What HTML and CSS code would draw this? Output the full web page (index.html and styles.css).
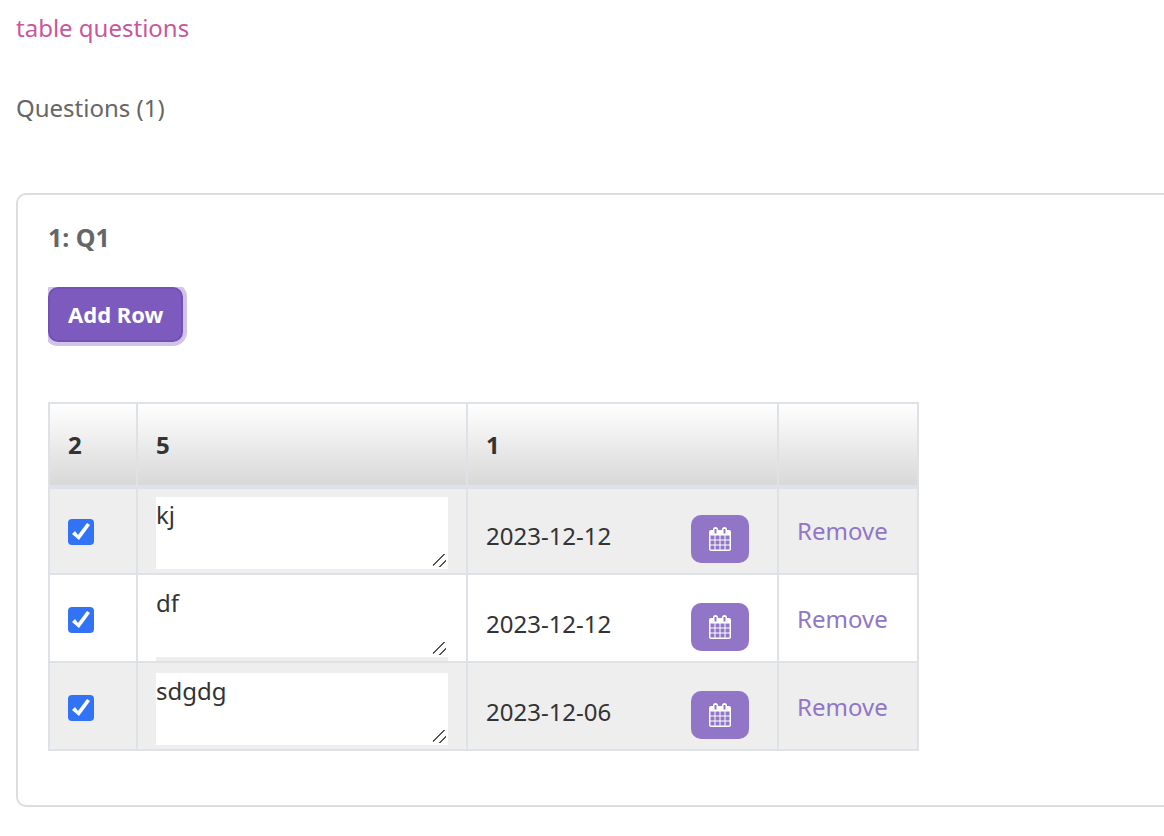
FILE: index.html
```html
<!DOCTYPE html>
<html lang="en">
<head>
  <meta charset="UTF-8" />
  <meta name="viewport" content="width=device-width, initial-scale=1.0"/>
  <title>table questions</title>
  <link rel="stylesheet" href="styles.css">
</head>
<body>
  <!-- calendar icon, shared by the date buttons -->
  <svg class="sprite" width="0" height="0" aria-hidden="true">
    <symbol id="icon-calendar" viewBox="0 0 22 24">
      <path fill="currentColor" fill-rule="evenodd" d="M2 3h2V2.500a2.500 2.500 0 0 1 5 0V3h4V2.500a2.500 2.500 0 0 1 5 0V3h2a2 2 0 0 1 2 2v17a2 2 0 0 1-2 2H2a2 2 0 0 1-2-2V5a2 2 0 0 1 2-2zM5.500 2v4.500h2V2zM14.500 2v4.500h2V2zM1.500 8.500v4h4v-4zM6.500 8.500v4h4v-4zM11.500 8.500v4h4v-4zM16.500 8.500v4h4v-4zM1.500 13.500v4h4v-4zM6.500 13.500v4h4v-4zM11.500 13.500v4h4v-4zM16.500 13.500v4h4v-4zM1.500 18.500v4h4v-4zM6.500 18.500v4h4v-4zM11.500 18.500v4h4v-4zM16.500 18.500v4h4v-4z"/>
    </symbol>
  </svg>

  <h1 class="title">table questions</h1>
  <h2 class="subtitle">Questions (1)</h2>

  <div class="question">
    <h3>1: Q1</h3>
    <div class="actions">
      <button class="btn" type="button">Add Row</button>
    </div>

    <table class="question-table">
      <thead>
        <tr>
          <th class="col-check">2</th>
          <th class="col-text">5</th>
          <th class="col-date">1</th>
          <th class="col-remove"></th>
        </tr>
      </thead>
      <tbody>
        <tr>
          <td><input type="checkbox" class="check" aria-label="2" checked></td>
          <td><div class="text-wrap"><textarea aria-label="5">kj</textarea></div></td>
          <td>
            <div class="date-group">
              <input type="text" aria-label="1" value="2023-12-12">
              <button type="button" aria-label="Pick a date"><svg><use href="#icon-calendar"/></svg></button>
            </div>
          </td>
          <td><a href="#" class="remove">Remove</a></td>
        </tr>
        <tr>
          <td><input type="checkbox" class="check" aria-label="2" checked></td>
          <td><div class="text-wrap"><textarea aria-label="5">df</textarea></div></td>
          <td>
            <div class="date-group">
              <input type="text" aria-label="1" value="2023-12-12">
              <button type="button" aria-label="Pick a date"><svg><use href="#icon-calendar"/></svg></button>
            </div>
          </td>
          <td><a href="#" class="remove">Remove</a></td>
        </tr>
        <tr>
          <td><input type="checkbox" class="check" aria-label="2" checked></td>
          <td><div class="text-wrap"><textarea aria-label="5">sdgdg</textarea></div></td>
          <td>
            <div class="date-group">
              <input type="text" aria-label="1" value="2023-12-06">
              <button type="button" aria-label="Pick a date"><svg><use href="#icon-calendar"/></svg></button>
            </div>
          </td>
          <td><a href="#" class="remove">Remove</a></td>
        </tr>
      </tbody>
    </table>
  </div>
</body>
</html>
```

FILE: styles.css
```css
* {
  box-sizing: border-box;
}
body {
  font-family: "Noto Sans", sans-serif;
  font-size: 24px;
  line-height: 32px;
  color: #333;
  background-color: #fff;
  margin: 0;
  padding: 12px 0 28px 16px;
}
.sprite {
  position: absolute;
}
.title,
.subtitle {
  font-size: 24px;
  font-weight: 400;
  margin: 0 0 48px;
}
.title {
  color: #c9579d;
}
.subtitle {
  color: #666;
  margin-bottom: 69px;
}
.question {
  border: 2px solid #ddd;
  border-right: none;
  border-radius: 10px 0 0 10px;
  padding: 26px 30px 54px;
}
.question h3 {
  font-size: 25px;
  font-weight: 700;
  color: #666;
  margin: 0 0 34px;
}
/* focus ring is cut off at the top and left */
.actions {
  overflow: hidden;
  padding-bottom: 5px;
  margin-bottom: 55px;
}
.btn {
  display: block;
  height: 55px;
  padding: 0 18px 2px;
  font-family: inherit;
  font-size: 22px;
  font-weight: 700;
  color: #fff;
  background-color: #7d5bbe;
  border: 2px solid #734fb6;
  border-radius: 10px;
  box-shadow: 0 0 0 4px #d0c4e7;
  cursor: pointer;
}
.question-table {
  table-layout: fixed;
  width: 871px;
  border-collapse: separate;
  border-spacing: 0;
  border-top: 2px solid #dee2e6;
  border-left: 2px solid #dee2e6;
}
.col-check {
  width: 88px;
}
.col-text {
  width: 330px;
}
.col-date {
  width: 311px;
}
.question-table th {
  height: 85px;
  padding: 0 18px;
  text-align: left;
  background: linear-gradient(#fff, #d8d8d8) padding-box;
  border-right: 2px solid #dee2e6;
  border-bottom: 4px solid #dee2e6;
}
.question-table td {
  height: 88px;
  padding: 10px 18px 0;
  vertical-align: top;
  border-right: 2px solid #dee2e6;
  border-bottom: 2px solid #dee2e6;
}
.question-table tbody tr:first-child td {
  height: 86px;
  padding-top: 8px;
}
.question-table tbody tr:nth-child(odd) {
  background-color: #eee;
}
.check {
  appearance: none;
  display: block;
  width: 26px;
  height: 26px;
  margin: 22px 0 0;
  border-radius: 4px;
  background-color: #3273f6;
}
.check:checked::before {
  content: "";
  display: block;
  width: 26px;
  height: 26px;
  background-color: #fff;
  clip-path: polygon(4px 15px, 7px 12px, 10px 16px, 19px 4px, 22px 6px, 11px 21px);
}
.text-wrap {
  background-color: #eee;
  padding-bottom: 4px;
}
.text-wrap textarea {
  display: block;
  width: 100%;
  height: 72px;
  padding: 2px 0 0;
  font: inherit;
  color: inherit;
  background-color: #fff;
  border: none;
  outline: none;
  resize: vertical;
}
.text-wrap textarea::-webkit-resizer {
  background: linear-gradient(135deg, transparent 40%, #555 40%, #555 48%, transparent 48%, transparent 71%, #555 71%, #555 79%, transparent 79%) no-repeat 0 0 / 13px 13px;
}
.date-group {
  display: flex;
  align-items: flex-start;
  padding: 18px 10px 0 0;
}
.date-group input {
  flex: 1;
  min-width: 0;
  height: 40px;
  padding: 0;
  font: inherit;
  color: inherit;
  background: none;
  border: none;
}
.date-group button {
  display: flex;
  align-items: center;
  justify-content: center;
  width: 58px;
  height: 48px;
  padding: 0;
  color: #fff;
  background-color: #9176c7;
  border: none;
  border-radius: 10px;
  cursor: pointer;
}
.date-group svg {
  width: 22px;
  height: 24px;
}
.remove {
  display: block;
  margin-top: 18px;
  color: #9176c7;
  text-decoration: none;
}
```
